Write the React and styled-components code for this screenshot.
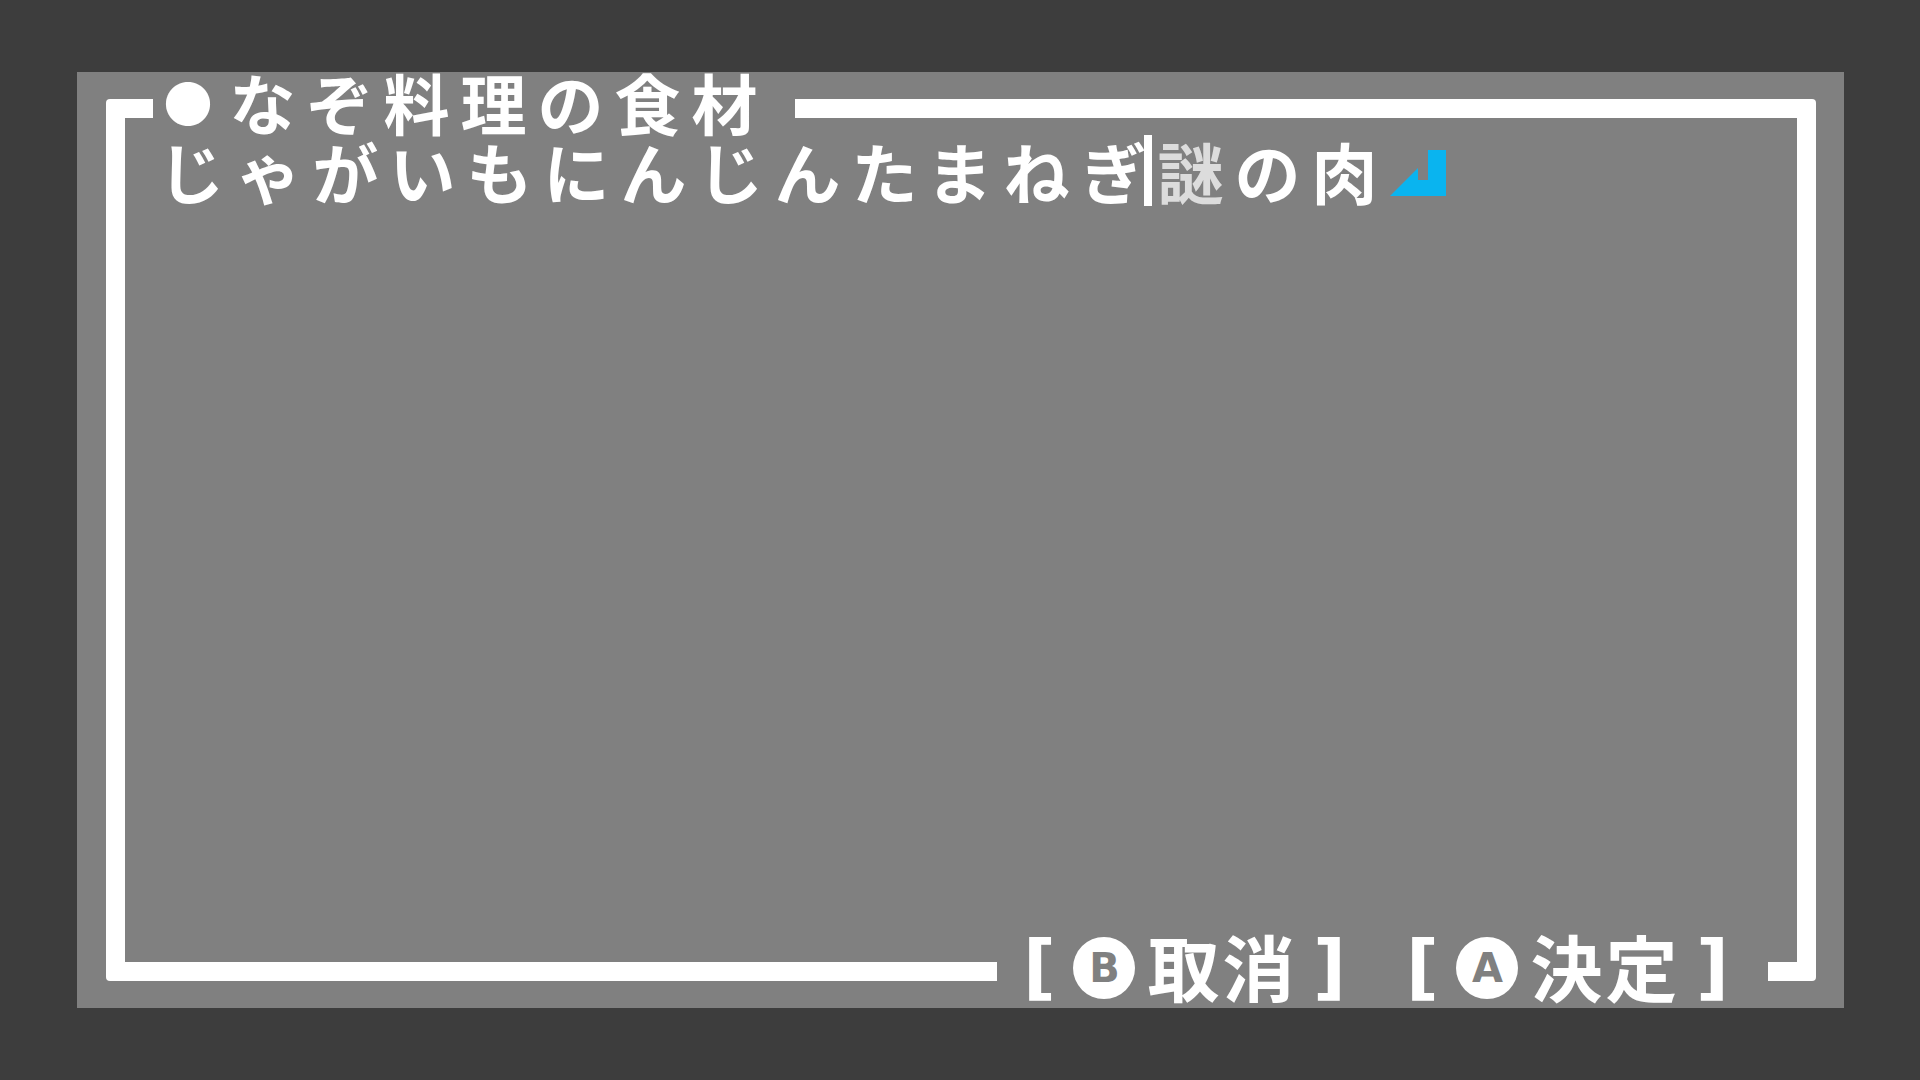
import React from 'react';
import styled, { createGlobalStyle } from 'styled-components';

const GlobalStyle = createGlobalStyle`
  html, body {
    margin: 0;
    padding: 0;
    background: #3d3d3d;
  }
  body {
    width: 100vw;
    height: 100vh;
    display: flex;
    align-items: center;
    justify-content: center;
    font-family: "Noto Sans CJK JP", "Noto Sans", sans-serif;
    font-weight: 700;
    color: #fff;
  }
`;

const Panel = styled.div`
  width: 1767px;
  height: 936px;
  box-sizing: border-box;
  padding: 27px 28px 27px 29px;
  background: #808080;
  display: flex;
  flex-direction: column;
`;

const Frame = styled.div`
  flex: 1;
  display: flex;
  flex-direction: column;
  border-left: 19px solid #fff;
  border-right: 19px solid #fff;
  border-radius: 4px;
`;

const EdgeRow = styled.div`
  height: 19px;
  flex-shrink: 0;
  display: flex;
  align-items: center;
`;

const Stub = styled.div`
  align-self: stretch;
  width: ${(p) => p.$w}px;
  margin-left: ${(p) => p.$ml || 0}px;
  background: #fff;
`;

const Rule = styled.div`
  align-self: stretch;
  flex: 1;
  background: #fff;
`;

const Title = styled.div`
  display: flex;
  align-items: center;
  font-size: 66px;
  letter-spacing: 11px;
  line-height: 19px;
  padding: 0 26px 14px 11px;
  white-space: nowrap;
`;

const Dot = styled.span`
  display: inline-block;
  width: 66px;
  font-size: 49px;
  letter-spacing: 0;
`;

const Entry = styled.div`
  margin-top: 16px;
  padding-left: 34px;
  display: flex;
  align-items: center;
  font-size: 66px;
  letter-spacing: 11px;
  line-height: 72px;
  white-space: nowrap;
`;

const Caret = styled.span`
  display: inline-block;
  width: 8px;
  height: 71px;
  margin: 0 6px 0 -14px;
  background: #fff;
`;

const Fresh = styled.span`
  color: #dcdcdc;
`;

const ReturnMark = styled.svg`
  margin: 6px 0 0 1px;
  flex-shrink: 0;
`;

const Spacer = styled.div`
  flex: 1;
`;

const Label = styled.div`
  display: flex;
  align-items: center;
  height: 19px;
  line-height: 19px;
  margin-left: ${(p) => p.$ml}px;
  white-space: nowrap;
`;

const Bracket = styled.span`
  display: flex;
  justify-content: center;
  width: 28px;
  font-family: "DejaVu Sans", "Liberation Sans", sans-serif;
  font-size: 72px;
  font-weight: 700;
  padding-bottom: 10px;
  margin-left: ${(p) => p.$ml || 0}px;
`;

const Badge = styled.span`
  width: 62px;
  height: 62px;
  margin: 0 0 7px 20px;
  border-radius: 50%;
  background: #fff;
  color: #808080;
  display: flex;
  align-items: center;
  justify-content: center;
  font-family: "DejaVu Sans", "Liberation Sans", sans-serif;
  font-size: 40px;
  font-weight: 700;
  line-height: 1;
`;

const Word = styled.span`
  font-size: 72px;
  letter-spacing: 3px;
  padding-bottom: 15px;
  margin-left: 12px;
`;

const Button = ({ letter, text }) => (
  <>
    <Bracket>[</Bracket>
    <Badge>{letter}</Badge>
    <Word>{text}</Word>
    <Bracket $ml={18}>]</Bracket>
  </>
);

export default function App() {
  return (
    <>
      <GlobalStyle />
      <Panel>
        <Frame>
          <EdgeRow>
            <Stub $w={28} />
            <Title>
              <Dot>●</Dot>
              なぞ料理の食材
            </Title>
            <Rule />
          </EdgeRow>
          <Entry>
            じゃがいもにんじんたまねぎ
            <Caret />
            <Fresh>謎</Fresh>
            の肉
            <ReturnMark width="56" height="46" viewBox="0 0 56 46">
              <polygon points="38,0 56,0 56,46 0,46 28,18 28,30 38,30" fill="#0ab4ef" />
            </ReturnMark>
          </Entry>
          <Spacer />
          <EdgeRow>
            <Rule />
            <Label $ml={28}>
              <Button letter="B" text="取消" />
            </Label>
            <Label $ml={65}>
              <Button letter="A" text="決定" />
            </Label>
            <Stub $w={29} $ml={41} />
          </EdgeRow>
        </Frame>
      </Panel>
    </>
  );
}
